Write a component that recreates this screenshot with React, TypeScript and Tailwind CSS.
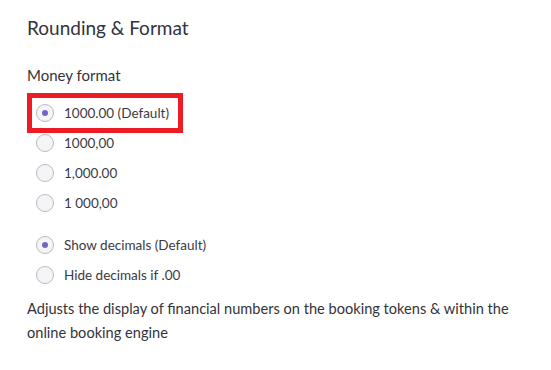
import React from "react";

const Radio = ({ checked, label }: { checked?: boolean; label: string }) => {
  return (
    <div className="flex items-center h-[30px]">
      <span className="flex h-[18px] w-[18px] items-center justify-center rounded-full border border-[#b9b9c3] bg-[#f5f5f8]">
        {checked && <span className="h-[6px] w-[6px] rounded-full bg-[#7a62c4]" />}
      </span>
      <span className="ml-[10px] text-[13.5px] text-[#3a3a44]">{label}</span>
    </div>
  );
};

export default function App() {
  return (
    <div
      className="w-[551px] h-[370px] bg-white px-[27px] pt-[15px] text-[#33333b]"
      style={{ fontFamily: "Lato, 'Open Sans', sans-serif" }}
    >
      <h2 className="text-[19px] leading-[26px]">Rounding &amp; Format</h2>
      <p className="mt-[24px] text-[15px] leading-[20px]">Money format</p>

      <div className="mt-[8px] flex flex-col">
        <div className="w-[156px] h-[40px] border-[5px] border-[#ed1c24] flex items-center pl-[4px]">
          <Radio checked label="1000.00 (Default)" />
        </div>
        <div className="pl-[9px] -mt-[5px]">
          <Radio label="1000,00" />
          <Radio label="1,000.00" />
          <Radio label="1 000,00" />
        </div>
      </div>

      <div className="mt-[12px] pl-[9px]">
        <Radio checked label="Show decimals (Default)" />
        <Radio label="Hide decimals if .00" />
      </div>

      <p className="mt-[7px] text-[14.6px] leading-[24px] -mr-[4px]">
        Adjusts the display of financial numbers on the booking tokens &amp; within the online booking engine
      </p>
    </div>
  );
}
